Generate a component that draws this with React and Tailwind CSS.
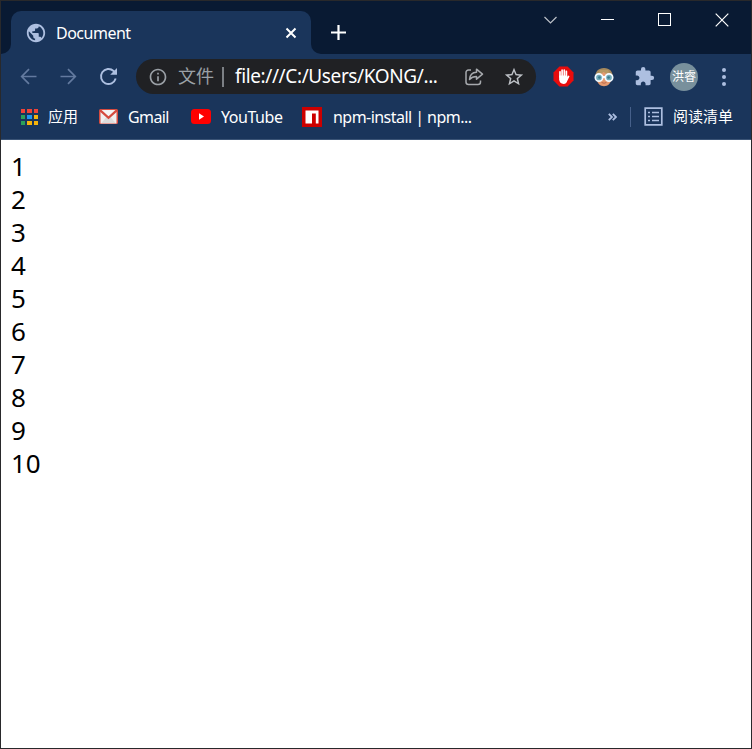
import React from 'react';
import { MdPublic, MdInfoOutline, MdStarBorder, MdExtension } from 'react-icons/md';

const APP_COLORS = [
  '#f04337', '#f04337', '#f04337',
  '#2ba05a', '#2196f3', '#f6b40c',
  '#2ba05a', '#f6b40c', '#f6b40c',
];

function TabStrip() {
  return (
    <div className="flex h-[53px] bg-[#091a33]">
      <div className="flex w-[10px] items-end bg-[#1a355b]">
        <div className="h-full w-full rounded-br-[10px] bg-[#091a33]" />
      </div>
      <div className="flex w-[300px] flex-none flex-col bg-[#091a33] pt-[10px]">
        <div className="flex h-[43px] items-center rounded-t-[10px] bg-[#1a355b] pr-[13px] pl-[14px]">
          <MdPublic className="size-[22px] text-[#adbfe0]" />
          <span className="mt-px ml-[9px] w-[90px] text-[16px] tracking-[-0.5px]">Document</span>
          <svg className="ml-auto size-[14px]" viewBox="0 0 14 14" fill="none" stroke="#fff" strokeWidth="2">
            <path d="M2.5 2.5l9 9M11.5 2.5l-9 9" />
          </svg>
        </div>
      </div>
      <div className="flex flex-1 bg-[#1a355b]">
        <div className="flex flex-1 rounded-bl-[10px] bg-[#091a33]">
          <svg className="mt-[23px] ml-[19px] size-[17px]" viewBox="0 0 17 17" fill="none" stroke="#fff" strokeWidth="2.2">
            <path d="M8.5 1v15M1 8.5h15" />
          </svg>
          <div className="ml-auto flex h-[37px] items-center">
            <div className="flex w-[57px] justify-center">
              <svg className="size-[15px]" viewBox="0 0 15 15" fill="none" stroke="#bcc1c8" strokeWidth="1.2">
                <path d="M1.5 5l6 6 6-6" />
              </svg>
            </div>
            <div className="flex w-[57px] justify-center">
              <div className="h-px w-[13px] bg-white" />
            </div>
            <div className="flex w-[57px] justify-center">
              <div className="size-[13px] border border-white" />
            </div>
            <div className="flex w-[58px] justify-center">
              <svg className="size-[14px]" viewBox="0 0 14 14" fill="none" stroke="#fff" strokeWidth="1.2">
                <path d="M.7 .7l12.6 12.6M13.3 .7L.7 13.3" />
              </svg>
            </div>
          </div>
        </div>
      </div>
    </div>
  );
}

function Arrow({ flip }) {
  return (
    <div className="flex w-10 justify-center">
      <svg className={flip ? 'size-[17px] rotate-180' : 'size-[17px]'} viewBox="0 0 17 17" fill="none" stroke="#637a9f" strokeWidth="1.7">
        <path d="M16.5 8.5H2M9 1.2L1.7 8.5 9 15.8" />
      </svg>
    </div>
  );
}

function StopHand() {
  return (
    <svg className="size-[21px]" viewBox="0 0 21 21">
      <path d="M6.4 .5h8.2l5.9 5.9v8.2l-5.9 5.9H6.4L.5 14.6V6.4z" fill="#e90c0c" />
      <g stroke="#fff" strokeWidth="1.7" strokeLinecap="round" fill="none">
        <path d="M7 11V5.8M9.1 10V4.2M11.3 10V4M13.4 11V5.4M15.6 10.400l-1.800 3.400" />
      </g>
      <path d="M6.150 9.500h8.100l.2 4.400c-.5 2.400-1.700 4-3.900 4-2.600 0-4.200-1.600-4.400-4.400z" fill="#fff" />
    </svg>
  );
}

function Face() {
  return (
    <svg className="size-[20px]" viewBox="0 0 20 20">
      <path d="M1.3 11C.8 4.5 4.5 1 10 1s9.200 3.500 8.700 10z" fill="#a78a5d" />
      <path d="M3 9l6-4.500 8 3.500v5c-.5 3.500-3.200 6.200-7 6.200S3.500 16.500 3 13z" fill="#e49a70" />
      <path d="M3 8.500C6 8 8.500 6.500 9.500 4.500c2 2.200 4.500 3.200 7.500 3.700L14 3H6z" fill="#b79863" />
      <path d="M7.600 15.500q2.400 1.500 4.800 0" stroke="#b9694d" fill="none" />
      <path d="M8.500 10h3" stroke="#fff" strokeWidth="2" />
      <circle cx="5" cy="10.500" r="3.700" fill="#72acba" stroke="#f4faff" strokeWidth="1.700" />
      <circle cx="15" cy="10.500" r="3.700" fill="#72acba" stroke="#f4faff" strokeWidth="1.700" />
      <circle cx="5.400" cy="10.500" r="1.300" fill="#397a8c" />
      <circle cx="14.600" cy="10.500" r="1.300" fill="#397a8c" />
    </svg>
  );
}

function Toolbar() {
  return (
    <div className="flex h-[45px] items-center pl-[7px]">
      <Arrow />
      <Arrow flip />
      <div className="flex w-[41px] justify-center">
        <svg className="size-[19px]" viewBox="0 0 19 19" fill="none" stroke="#adbfe0" strokeWidth="1.900">
          <path d="M16.700 11.500A7.500 7.500 0 1 1 14.600 4l1.800 1.800" />
          <path d="M18 1v6.800h-6.800z" fill="#adbfe0" stroke="none" />
        </svg>
      </div>
      <div className="ml-[7px] flex h-[35px] w-[400px] flex-none items-center rounded-full bg-[#202124] pl-[12px]">
        <MdInfoOutline className="size-[20px] flex-none text-[#9aa0a6]" />
        <span className="ml-[10px] w-[36px] flex-none text-[18px] whitespace-nowrap text-[#9aa0a6]">文件</span>
        <div className="ml-[8px] h-[20px] w-[2px] flex-none bg-[#7c8085]" />
        <span className="ml-[11px] w-[219px] flex-none text-[19px] tracking-[-0.38px] whitespace-nowrap">file:///C:/Users/KONG/...</span>
        <div className="flex w-10 flex-none justify-center">
          <svg className="size-[20px]" viewBox="0 0 20 20" fill="none" stroke="#a6a9ad" strokeWidth="1.500" strokeLinejoin="round">
            <path d="M7 3H4.500a2.500 2.500 0 0 0-2.500 2.500v9.500a2.500 2.500 0 0 0 2.500 2.500h9.500a2.500 2.500 0 0 0 2.500-2.500v-1.500" />
            <path d="M12.500 2.200l6 5-6 5V9.500c-3.200 0-5.200.8-7 3 .3-4.200 2.700-7 7-7.200z" />
          </svg>
        </div>
        <div className="flex w-10 flex-none justify-center">
          <MdStarBorder className="size-[22px] text-[#bdc1c6]" />
        </div>
      </div>
      <div className="ml-[7px] flex w-10 justify-center"><StopHand /></div>
      <div className="ml-px flex w-10 justify-center"><Face /></div>
      <div className="flex w-10 justify-center"><MdExtension className="size-[21px] text-[#adbfe0]" /></div>
      <div className="ml-[6px] flex size-[28px] items-center justify-center rounded-full bg-[#78909c] text-[12px] whitespace-nowrap">洪睿</div>
      <div className="ml-[24px] flex flex-col gap-[3px]">
        <div className="size-[4px] rounded-full bg-[#adbfe0]" />
        <div className="size-[4px] rounded-full bg-[#adbfe0]" />
        <div className="size-[4px] rounded-full bg-[#adbfe0]" />
      </div>
    </div>
  );
}

function Bookmarks() {
  return (
    <div className="flex h-[41px] items-center border-b border-[#3b5476] pb-[5px] pl-[20px] text-[15px] whitespace-nowrap">
      <div className="grid w-[17px] flex-none grid-cols-3 gap-[2px]">
        {APP_COLORS.map((color, i) => (
          <div key={i} className="h-[4px]" style={{ backgroundColor: color }} />
        ))}
      </div>
      <span className="ml-[10px] w-[30px] flex-none">应用</span>
      <svg className="ml-[21px] h-[15px] w-[19px] flex-none" viewBox="0 0 19 15">
        <rect width="19" height="15" rx="1.500" fill="#d54b3f" />
        <path d="M1.500 1h16v13.500h-16z" fill="#f0f0f0" />
        <path d="M2.500 14l5-6h4l5 6z" fill="#dcdcdc" />
        <path d="M1 1.200l8.500 7.600L18 1.200" fill="#f5f5f5" stroke="#d54b3f" strokeWidth="2.300" />
      </svg>
      <span className="ml-[10px] w-[43px] flex-none text-[16px] tracking-[-0.6px]">Gmail</span>
      <svg className="ml-[20px] h-[15px] w-[20px] flex-none" viewBox="0 0 20 15">
        <rect width="20" height="15" rx="3.500" fill="#f00" />
        <path d="M8 4.300l5 3.200-5 3.200z" fill="#fff" />
      </svg>
      <span className="ml-[10px] w-[62px] flex-none text-[16px] tracking-[-0.45px]">YouTube</span>
      <svg className="ml-[19px] size-[20px] flex-none" viewBox="0 0 20 20">
        <path d="M0 0h20v20H0z" fill="#c00" />
        <path d="M3.500 3.500h13v13h-2.700V6.500H10v10H3.500z" fill="#fff" />
      </svg>
      <span className="ml-[11px] w-[140px] flex-none text-[16px] tracking-[-0.54px]">npm-install | npm...</span>
      <svg className="ml-[135px] h-[8px] w-[9px] flex-none" viewBox="0 0 9 8" fill="none" stroke="#adbfe0" strokeWidth="1.800">
        <path d="M.8 .8L4 4 .8 7.200M4.800 .8L8 4 4.800 7.200" />
      </svg>
      <div className="ml-[13px] h-[20px] w-px flex-none bg-[#46608a]" />
      <svg className="ml-[13px] size-[19px] flex-none" viewBox="0 0 19 19" fill="none" stroke="#adbfe0" strokeWidth="1.700">
        <path d="M1.200 1.200h16.600v16.600H1.200zM4 5.500h2M8 5.500h7M4 9.500h2M8 9.500h7M4 13.500h2M8 13.500h7" />
      </svg>
      <span className="ml-[10px]">阅读清单</span>
    </div>
  );
}

export default function App() {
  return (
    <div className="flex h-[749px] w-[752px] flex-col overflow-hidden border border-[#29292b] bg-[#1a355b] font-['Noto_Sans','Noto_Sans_CJK_SC',sans-serif] text-white">
      <TabStrip />
      <Toolbar />
      <Bookmarks />
      <main className="flex-1 bg-white pt-[10px] pl-[10px] text-[26px] leading-[33px] text-black">
        {Array.from({ length: 10 }, (_, i) => (
          <div key={i}>{i + 1}</div>
        ))}
      </main>
    </div>
  );
}
